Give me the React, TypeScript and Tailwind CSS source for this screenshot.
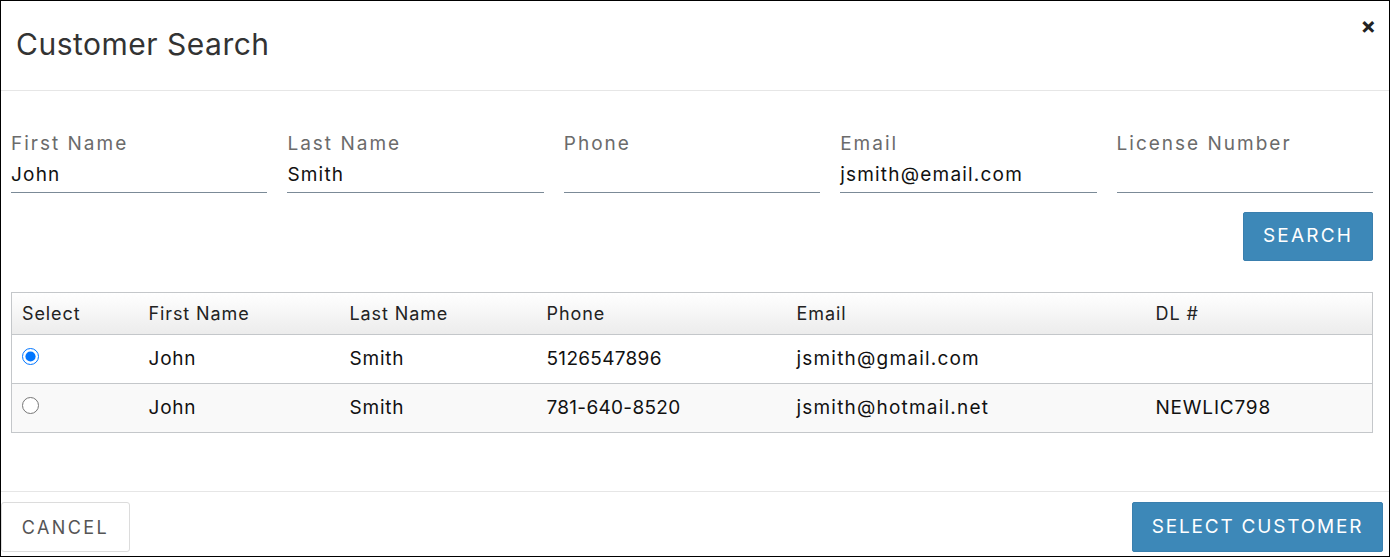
import React from "react";

const fields = [
  { label: "First Name", value: "John" },
  { label: "Last Name", value: "Smith" },
  { label: "Phone", value: "" },
  { label: "Email", value: "jsmith@email.com" },
  { label: "License Number", value: "" },
];

const rows = [
  { checked: true, first: "John", last: "Smith", phone: "5126547896", email: "jsmith@gmail.com", dl: "" },
  { checked: false, first: "John", last: "Smith", phone: "781-640-8520", email: "jsmith@hotmail.net", dl: "NEWLIC798" },
];

export default function App() {
  return (
    <div
      className="w-[1390px] h-[557px] border border-black bg-white flex flex-col text-[#222]"
      style={{ fontFamily: "Inter, 'Noto Sans', sans-serif" }}
    >
      {/* header */}
      <div className="h-[90px] shrink-0 border-b border-[#e6e6e6] flex items-center justify-between pl-[15px] pr-[13px]">
        <h2 className="text-[30px] leading-[36px] mb-[3px] text-[#333] tracking-[0.5px]">Customer Search</h2>
        <button className="self-start mt-[14px] text-[23px] font-bold leading-none text-[#222]">×</button>
      </div>

      {/* body */}
      <div className="flex-1 pl-[10px] pr-[16px] pt-[41px]">
        <div className="grid grid-cols-5 gap-x-[20px]">
          {fields.map((f) => (
            <div key={f.label} className="flex flex-col">
              <label className="text-[19px] leading-[24px] text-[#6b6b6b] tracking-[2px]">{f.label}</label>
              <div className="h-[37px] pt-[7px] border-b border-[#7b8a97] text-[19px] leading-[24px] tracking-[1.2px] text-[#111]">
                {f.value}
              </div>
            </div>
          ))}
        </div>

        <div className="flex justify-end mt-[19px]">
          <button className="w-[130px] h-[49px] bg-[#3d88b8] border border-[#3a7fae] rounded-[2px] text-white text-[19px] tracking-[2.2px]">
            SEARCH
          </button>
        </div>

        <table className="w-full mt-[31px] border border-[#c4c7ca] border-collapse text-left">
          <colgroup>
            <col className="w-[127px]" />
            <col className="w-[201px]" />
            <col className="w-[197px]" />
            <col className="w-[250px]" />
            <col className="w-[359px]" />
            <col />
          </colgroup>
          <thead>
            <tr className="h-[42px] bg-gradient-to-b from-white to-[#ececec] border-b border-[#c4c7ca]">
              {["Select", "First Name", "Last Name", "Phone", "Email", "DL #"].map((h) => (
                <th key={h} className="px-[10px] text-[18px] font-normal tracking-[0.9px] text-[#222]">
                  {h}
                </th>
              ))}
            </tr>
          </thead>
          <tbody>
            {rows.map((r, i) => (
              <tr key={i} className={`h-[49px] border-b border-[#c4c7ca] ${i % 2 ? "bg-[#f9f9f9]" : "bg-white"}`}>
                <td className="px-[10px] align-top pt-[12px]">
                  <input type="radio" name="sel" defaultChecked={r.checked} className="w-[17px] h-[17px] m-0 accent-[#0075ff]" />
                </td>
                <td className="px-[10px] text-[19px] tracking-[0.8px] text-[#111]">{r.first}</td>
                <td className="px-[10px] text-[19px] tracking-[0.8px] text-[#111]">{r.last}</td>
                <td className="px-[10px] text-[19px] tracking-[0.3px] text-[#111]">{r.phone}</td>
                <td className="px-[10px] text-[19px] tracking-[1.2px] text-[#111]">{r.email}</td>
                <td className="px-[10px] text-[19px] tracking-[0.8px] text-[#111]">{r.dl}</td>
              </tr>
            ))}
          </tbody>
        </table>
      </div>

      {/* footer */}
      <div className="h-[65px] shrink-0 border-t border-[#e6e6e6] flex items-start justify-between pt-[10px] pr-[6px]">
        <button className="w-[129px] h-[50px] border border-[#dcdcdc] rounded-[3px] bg-white text-[18px] text-[#555] tracking-[2.4px]">
          CANCEL
        </button>
        <button className="w-[251px] h-[50px] bg-[#3d88b8] border border-[#3a7fae] rounded-[2px] text-white text-[19px] tracking-[1.8px]">
          SELECT CUSTOMER
        </button>
      </div>
    </div>
  );
}
